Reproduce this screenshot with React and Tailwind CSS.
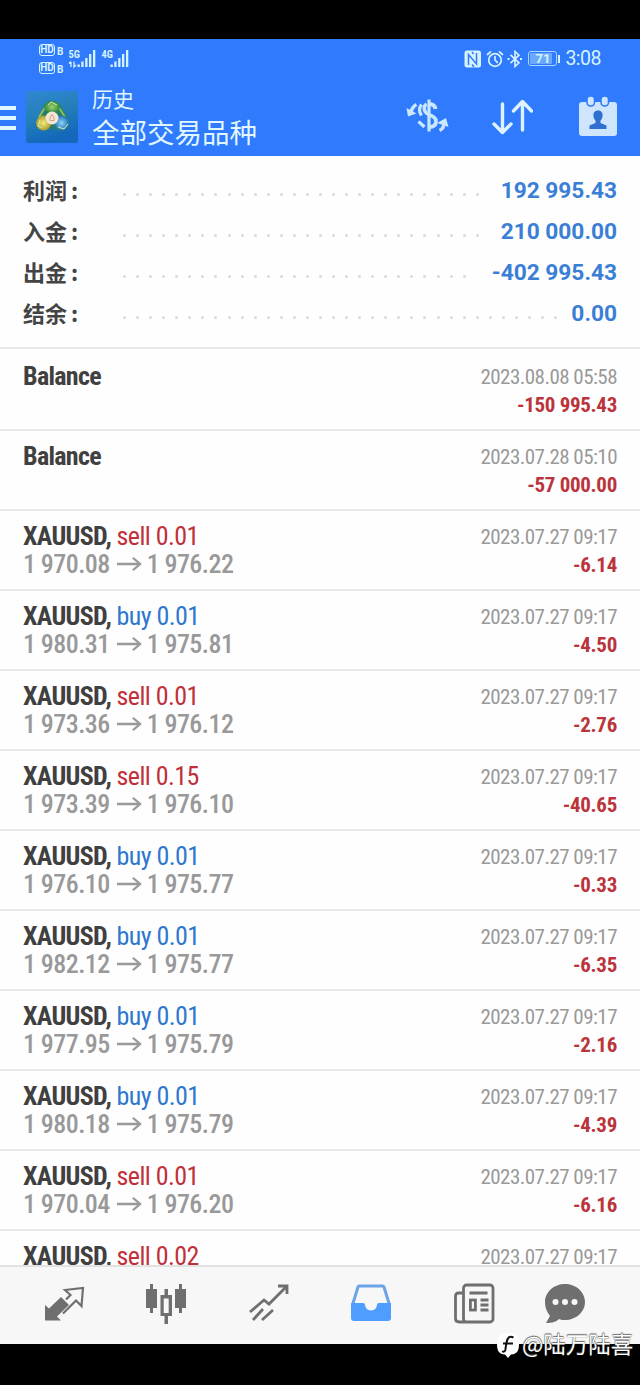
import clsx from "clsx";

const summary = [
    { label: "利润", value: "192 995.43", dots: 28 },
    { label: "入金", value: "210 000.00", dots: 28 },
    { label: "出金", value: "-402 995.43", dots: 27 },
    { label: "结余", value: "0.00", dots: 34 },
];

const history = [
    { type: "balance", time: "2023.08.08 05:58", profit: "-150 995.43" },
    { type: "balance", time: "2023.07.28 05:10", profit: "-57 000.00" },
    { type: "sell", volume: "0.01", from: "1 970.08", to: "1 976.22", time: "2023.07.27 09:17", profit: "-6.14" },
    { type: "buy", volume: "0.01", from: "1 980.31", to: "1 975.81", time: "2023.07.27 09:17", profit: "-4.50" },
    { type: "sell", volume: "0.01", from: "1 973.36", to: "1 976.12", time: "2023.07.27 09:17", profit: "-2.76" },
    { type: "sell", volume: "0.15", from: "1 973.39", to: "1 976.10", time: "2023.07.27 09:17", profit: "-40.65" },
    { type: "buy", volume: "0.01", from: "1 976.10", to: "1 975.77", time: "2023.07.27 09:17", profit: "-0.33" },
    { type: "buy", volume: "0.01", from: "1 982.12", to: "1 975.77", time: "2023.07.27 09:17", profit: "-6.35" },
    { type: "buy", volume: "0.01", from: "1 977.95", to: "1 975.79", time: "2023.07.27 09:17", profit: "-2.16" },
    { type: "buy", volume: "0.01", from: "1 980.18", to: "1 975.79", time: "2023.07.27 09:17", profit: "-4.39" },
    { type: "sell", volume: "0.01", from: "1 970.04", to: "1 976.20", time: "2023.07.27 09:17", profit: "-6.16" },
    { type: "sell", volume: "0.02", time: "2023.07.27 09:17" },
];

function HdBadge() {
    return (
        <div className="flex h-[12px] items-end gap-[2px] text-[#d5f3ff]">
            <span className="flex h-[12px] w-[16px] items-center justify-center rounded-[3px] border border-current text-[10px] leading-none font-bold">
                HD
            </span>
            <span className="text-[10px] leading-[8px] font-bold">B</span>
        </div>
    );
}

function Signal({ label, arrows }) {
    return (
        <div className="relative h-[20px] w-[29px] text-[#d5f3ff]">
            <span className="absolute top-0 left-0 text-[10.500px] leading-[9px] font-bold [font-stretch:75%]">
                {label}
            </span>
            <svg viewBox="0 0 29 20" className="h-[20px] w-[29px]" fill="currentColor">
                {arrows && (
                    <path d="M3 17v-5M1 13.500l2-2M6 11.500V17l2-2" fill="none" stroke="currentColor" strokeWidth="1.300" />
                )}
                <rect x="9.500" y="14.500" width="2.300" height="2.500" />
                <rect x="13.300" y="11.500" width="2.300" height="5.500" />
                <rect x="17.200" y="8" width="2.300" height="9" />
                <rect x="21" y="4" width="2.300" height="13" />
                <rect x="25" y="0" width="2.300" height="17" />
            </svg>
        </div>
    );
}

function StatusBar() {
    return (
        <div className="flex h-[41px] items-start justify-between pr-[39px] pl-[39px]">
            <div className="flex pt-[5px]">
                <div className="flex flex-col gap-[6px]">
                    <HdBadge />
                    <HdBadge />
                </div>
                <div className="flex gap-[4px] pt-[6px] pl-[5px]">
                    <Signal label="5G" arrows />
                    <Signal label="4G" />
                </div>
            </div>
            <div className="flex h-[39px] items-center text-[#d5f3ff]">
                <svg viewBox="0 0 18 18" className="h-[18px] w-[18px]">
                    <rect x="0.500" y="0.500" width="16.500" height="17" rx="2.500" fill="currentColor" />
                    <path d="M4.500 15V4.500l8 9.500V3M8 2l1.500 2M8 14.500L10 17" fill="none" stroke="#2f7afd" strokeWidth="1.500" />
                </svg>
                <svg viewBox="0 0 18 18" className="ml-[4px] h-[18px] w-[18px]" fill="none" stroke="currentColor" strokeWidth="1.700" strokeLinecap="round">
                    <circle cx="9" cy="10" r="6.300" />
                    <path d="M9 6.500V10l2.300 2.400M1.500 4.500L4.500 1.800M16.500 4.500L13.500 1.800" />
                </svg>
                <svg viewBox="0 0 16 18" className="ml-[3px] h-[18px] w-[16px]" fill="none" stroke="currentColor" strokeWidth="1.600">
                    <path d="M3.500 4.800l8.500 8L8 16.500V1.500l4 3.700-8.500 8" />
                    <path d="M1.500 8v2M14 8v2" strokeWidth="2" />
                </svg>
                <div className="ml-[5px] flex items-center gap-px">
                    <div className="h-[15px] w-[29px] rounded-[3px] border border-[#a9d7ff] p-px">
                        <div className="flex h-full w-[22px] items-center justify-center rounded-[1px] bg-[#6aa8fb] pl-[3px] text-[13px] leading-none font-bold">
                            71
                        </div>
                    </div>
                    <div className="h-[8px] w-[2px] bg-current" />
                </div>
                <span className="ml-[5px] text-[19.500px] leading-none tracking-[-0.500px]">3:08</span>
            </div>
        </div>
    );
}

function AppLogo() {
    return (
        <svg viewBox="0 0 52 52" className="h-[52px] w-[52px]">
            <defs>
                <linearGradient id="logoBg" x1="0" y1="0" x2="0.300" y2="1">
                    <stop offset="0" stopColor="#3187d5" />
                    <stop offset="0.500" stopColor="#2480b8" />
                    <stop offset="1" stopColor="#1368bb" />
                </linearGradient>
                <radialGradient id="logoGreen"><stop offset="0" stopColor="#a5d06a" /><stop offset="1" stopColor="#2c8940" /></radialGradient>
                <radialGradient id="logoGold"><stop offset="0" stopColor="#f5ea77" /><stop offset="1" stopColor="#a89c35" /></radialGradient>
                <radialGradient id="logoBlue"><stop offset="0" stopColor="#8bd5fa" /><stop offset="1" stopColor="#2170b5" /></radialGradient>
            </defs>
            <rect width="52" height="52" rx="2" fill="url(#logoBg)" />
            <path d="M26 10c-5 0-8 3-9 7l-4 8c-4 5-4 12 2 14 4 1 8 0 11-2 4 3 8 4 12 2 6-2 7-9 3-14l-5-8c-1-4-5-7-10-7z" fill="#277d68" />
            <path d="M13 26l7-11M39 26l-7-11" stroke="#8fbf5c" strokeWidth="2" />
            <ellipse cx="26" cy="16" rx="8" ry="6" fill="url(#logoGreen)" />
            <circle cx="17.500" cy="32" r="7.500" fill="url(#logoGold)" />
            <circle cx="35.500" cy="32" r="7.500" fill="url(#logoBlue)" />
            <path d="M22 14l3-3 6 3M14 29l-2 6 4 2M32 36l6 2 4-5" fill="none" stroke="#d7edae" strokeWidth="1" />
            <circle cx="26" cy="27" r="6.500" fill="#f3e6d4" />
            <path d="M26 23.500l2 3v3h-4v-3z" fill="none" stroke="#d3a084" />
        </svg>
    );
}

function Header() {
    return (
        <header className="h-[117px] bg-[#2f7afd]">
            <StatusBar />
            <div className="flex h-[76px] items-start text-[#e0f7ff]">
                <div className="mt-[26px] flex w-[16px] flex-col gap-[6px]">
                    <div className="h-[4px] bg-current" />
                    <div className="h-[4px] bg-current" />
                    <div className="h-[4px] bg-current" />
                </div>
                <div className="mt-[11px] ml-[10px]">
                    <AppLogo />
                </div>
                <div className="mt-[6px] ml-[14px] w-[281px] font-['Noto_Sans_CJK_SC',sans-serif]">
                    <div className="text-[21px] leading-[25px]">历史</div>
                    <div className="mt-[2px] text-[27.500px] leading-[36px]">全部交易品种</div>
                </div>
                <svg viewBox="0 0 44 40" className="mt-[17px] ml-[33px] h-[40px] w-[44px]" fill="none" stroke="#c9e7ff" strokeWidth="3.200">
                    <path d="M23 2.500v32" />
                    <path d="M29.500 12c-.5-3.500-3-5-6.500-5M22 17.500c6 1.500 8 3.500 8 7 0 3.500-2.500 5.500-7 5.500" strokeWidth="3.800" />
                    <path d="M20.500 7c-3.500 2.500-3 8 2 10.500" strokeWidth="3.400" />
                    <path d="M15.500 7.500c-2.500 3.500-2.500 7.500 0 11M12.500 24.500l6 5.500" />
                    <path d="M10.500 7.500C7.500 9 6 11 5 15" strokeWidth="3.600" />
                    <path d="M.5 11l1.500 8.500 8.500-3z" fill="#c9e7ff" stroke="none" />
                    <path d="M33.500 33.500c3.500-1.500 4.500-4 4.500-7.500" strokeWidth="3.400" />
                    <path d="M31 26l9-5 2.500 9z" fill="#c9e7ff" stroke="none" />
                </svg>
                <svg viewBox="0 0 42 36" className="mt-[19px] ml-[41px] h-[36px] w-[42px]" fill="none" stroke="#dcf3ff" strokeWidth="3.400" strokeLinecap="round" strokeLinejoin="round">
                    <path d="M11.500 5v28M3 25l8.500 8.500L20 25M31.500 31V3M22.500 12L31.500 2.500l9 9.500" />
                </svg>
                <svg viewBox="0 0 38 40" className="mt-[16px] ml-[46px] h-[40px] w-[38px]">
                    <path d="M3 6h32a3 3 0 0 1 3 3v28a3 3 0 0 1-3 3H3a3 3 0 0 1-3-3V9a3 3 0 0 1 3-3z" fill="#cfe5fd" />
                    <g fill="#cfe5fd" stroke="#2f7afd" strokeWidth="1.500">
                        <rect x="8" y="0" width="7.500" height="10" rx="3.500" />
                        <rect x="22" y="0" width="7.500" height="10" rx="3.500" />
                    </g>
                    <path d="M19 14.500c-3.500 0-5 2.500-4.500 6 .3 2 1 3 2 4v2.500l-6 2.500V33h17v-3.500l-6-2.500v-2.500c1-1 1.700-2 2-4 .5-3.500-1-6-4.500-6z" fill="#2f6fd0" />
                </svg>
            </div>
        </header>
    );
}

function SummaryRow({ label, value, dots }) {
    return (
        <div className="flex h-[41px] items-center px-[23px]">
            <div className="-mt-[4px] w-[100px] font-['Noto_Sans_CJK_SC',sans-serif] text-[22px] leading-none font-bold text-[#444]">
                {label}
                <span className="ml-[4px]">:</span>
            </div>
            <div className="mt-[8px] flex gap-[10.070px]">
                {Array.from({ length: dots }, (_, i) => (
                    <div key={i} className="h-[3px] w-[3px] rounded-full bg-[#dadada]" />
                ))}
            </div>
            <div className="mt-[2px] ml-auto text-[22.700px] leading-none font-bold text-[#3a7fd5]">{value}</div>
        </div>
    );
}

function HistoryRow({ type, volume, from, to, time, profit }) {
    return (
        <div className="flex h-[80px] shrink-0 justify-between border-b-2 border-[#e9e9e9] px-[23px] [font-stretch:75%]">
            <div className="pt-[10px]">
                <div className="text-[26px] leading-[30px] tracking-[-0.700px] whitespace-nowrap">
                    {type === "balance" ? (
                        <span className="font-bold text-[#404040]">Balance</span>
                    ) : (
                        <>
                            <span className="font-bold text-[#404040]">XAUUSD, </span>
                            <span className={clsx("tracking-[-0.550px]", type === "sell" ? "text-[#c0303a]" : "text-[#2d77cd]")}>
                                {type} {volume}
                            </span>
                        </>
                    )}
                </div>
                {from && (
                    <div className="-mt-[2px] flex items-center text-[26px] leading-[30px] font-medium tracking-[-0.570px] whitespace-nowrap text-[#999]">
                        <span>{from}</span>
                        <svg viewBox="0 0 26 16" className="mr-[5px] ml-[7px] h-[16px] w-[25px]" fill="none" stroke="currentColor" strokeWidth="2.400">
                            <path d="M0 8h24M16.500 1.500L24 8l-7.500 6.500" />
                        </svg>
                        <span>{to}</span>
                    </div>
                )}
            </div>
            <div className="pt-[12px] text-right text-[21px] leading-[28px]">
                <div className="tracking-[-0.540px] text-[#999]">{time}</div>
                <div className="font-bold tracking-[-0.300px] text-[#bb343b]">{profit}</div>
            </div>
        </div>
    );
}

function TabBar() {
    return (
        <nav className="flex h-[79px] shrink-0 items-start border-t-2 border-[#e2e2e2] bg-[#f7f7f7] pt-[16px] text-[#6f6f6f]">
            <svg viewBox="0 0 42 42" className="ml-[43px] h-[42px] w-[42px]">
                <path d="M2 22l4 3.500L18 14l8 8-12 11.500 4 4H2z" fill="currentColor" />
                <path d="M20 30.500L33 17.500l5.500 5.500 1.500-18-18 2 5.500 5-4.500 4.500" fill="none" stroke="currentColor" strokeWidth="2.200" />
            </svg>
            <svg viewBox="0 0 42 42" className="ml-[60px] h-[42px] w-[42px]" fill="currentColor">
                <path d="M5 1h3v5h4v19H8v5H5v-5H1V6h4zM34 1h3v5h4v19h-4v5h-3v-5h-4V6h4z" />
                <path fillRule="evenodd" d="M19.500 6h3.500v6h4v21h-4v8h-3.500v-8h-4V12h4zM18.700 15.500v14.500h5V15.500z" />
            </svg>
            <svg viewBox="0 0 42 42" className="ml-[62px] h-[42px] w-[42px]" fill="none" stroke="currentColor" strokeWidth="2.800">
                <path d="M1 29l14-12 5 4L37 4M29 3h9v8M4 37l10-11M13 37l11-10" />
            </svg>
            <svg viewBox="0 0 40 40" className="mt-px ml-[60px] h-[40px] w-[40px]">
                <path d="M1.500 21L7 3q.3-1 1.500-1h23q1.200 0 1.500 1l5.500 18" fill="none" stroke="#6ba4e8" strokeWidth="3" />
                <path d="M0 19h12c2 0 2 2 2.500 4 1.500 4.500 9.500 4.500 11 0 .5-2 .5-4 2.500-4h12v15a3 3 0 0 1-3 3H3a3 3 0 0 1-3-3z" fill="#4f9dff" />
            </svg>
            <svg viewBox="0 0 42 42" className="ml-[61px] h-[42px] w-[43px]" fill="none" stroke="currentColor" strokeWidth="2.800">
                <rect x="11" y="2" width="29.500" height="37" rx="3" />
                <path d="M10 10H6q-3 0-3 3v22.500q0 3.500 4 3.500h6M17 10h18M28 17h8M28 22h8M28 27h8" />
                <rect x="17.900" y="17" width="5" height="10" />
            </svg>
            <svg viewBox="0 0 40 42" className="ml-[50px] h-[42px] w-[40px]">
                <path d="M20 1C9 1 0 9 0 19c0 6 2 10 5 14l-4 7c6 0 10-1 13-4 2 1 4 1 6 1 11 0 20-8 20-18S31 1 20 1z" fill="currentColor" />
                <g fill="#f7f7f7">
                    <circle cx="10.500" cy="19" r="3" />
                    <circle cx="20" cy="19" r="3" />
                    <circle cx="29.500" cy="19" r="3" />
                </g>
            </svg>
        </nav>
    );
}

function Watermark() {
    return (
        <div className="absolute top-[1330px] left-[496px] flex items-center text-white">
            <svg viewBox="0 0 24 28" className="h-[28px] w-[24px]">
                <path d="M12 3C4 3 1 7 1 14s2 10 8 10.500l3 3.500 3-3.500c6-.5 8-3.500 8-10.500S20 3 12 3z" fill="#fff" />
                <path d="M17.500 7.500c-4-2-6 0-7 5L9.300 20c-.5 2-2 2-3 1M7 13.500h10" fill="none" stroke="#111" strokeWidth="2" />
            </svg>
            <span className="-mt-[2px] ml-[2px] font-['Noto_Sans_CJK_SC',sans-serif] text-[22.500px] leading-[28px] whitespace-nowrap [text-shadow:0_0_1px_#000,0_-1px_1px_#777]">
                @陆万陆喜
            </span>
        </div>
    );
}

export default function App() {
    return (
        <div className="relative flex h-[1385px] w-[640px] flex-col overflow-hidden bg-black pt-[39px] font-['Roboto',sans-serif]">
            <Header />
            <main className="flex h-[1109px] shrink-0 flex-col overflow-hidden bg-[#fefefe]">
                <section className="mb-[2px] h-[193px] shrink-0 border-b-2 border-[#e9e9e9] pt-[14px]">
                    {summary.map((row) => (
                        <SummaryRow key={row.label} {...row} />
                    ))}
                </section>
                {history.map((row, i) => (
                    <HistoryRow key={i} {...row} />
                ))}
            </main>
            <TabBar />
            <Watermark />
        </div>
    );
}
